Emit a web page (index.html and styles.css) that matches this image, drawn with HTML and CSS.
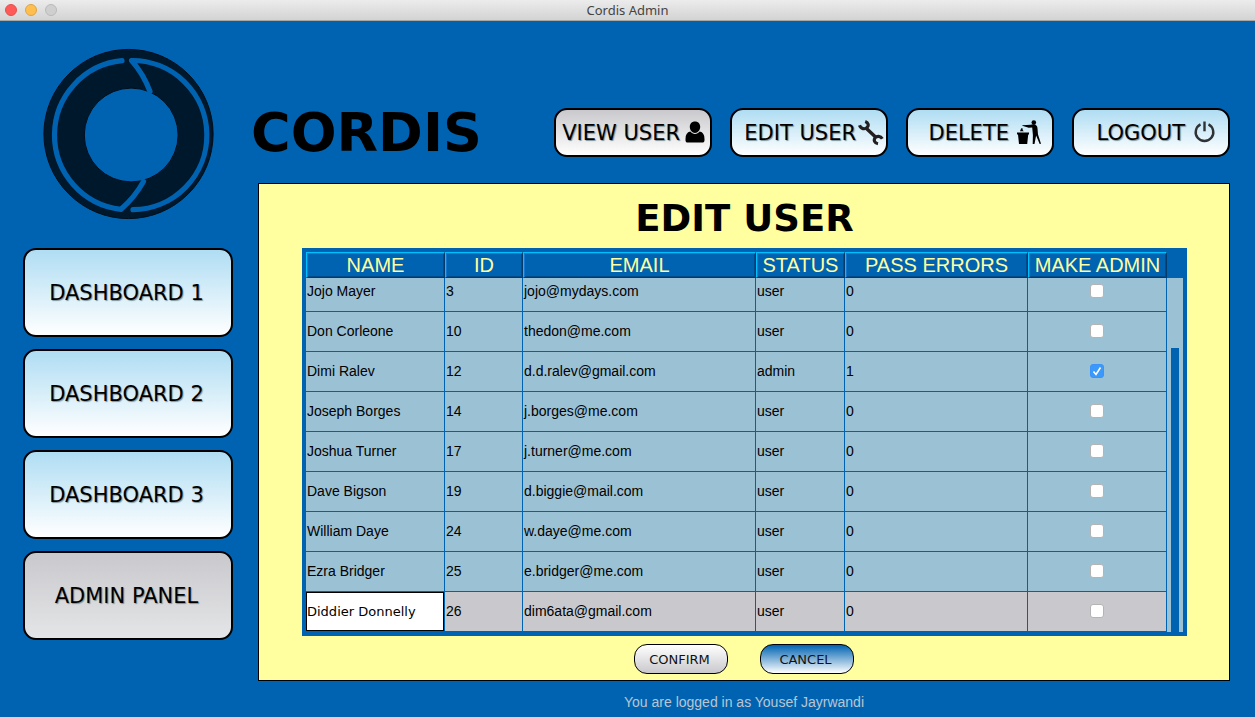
FILE: index.html
```html
<!DOCTYPE html>
<html lang="en">
<head>
<meta charset="utf-8">
<title>Cordis Admin</title>
<link rel="stylesheet" href="styles.css">
</head>
<body>
<header class="titlebar">
  <div class="lights"><span class="light light-close"></span><span class="light light-min"></span><span class="light"></span></div>
  <span class="window-title">Cordis Admin</span>
</header>
<div class="app">
  <aside class="sidebar">
    <svg class="logo" viewBox="42 48 172 172" role="img" aria-label="Cordis logo">
      <circle cx="128.5" cy="134" r="84.6" fill="#00182b" stroke="#000d1a" stroke-width="1"/>
      <circle cx="131.2" cy="135" r="46.9" fill="#0063b1" stroke="#000d1a" stroke-width="1"/>
      <g fill="none" stroke="#0063b1" stroke-width="5.2" stroke-linecap="round">
        <path d="M122 60.7A74.7 74.7 0 0 0 121 209.3Q135 197 143.500 181.500" stroke-linejoin="miter"/>
        <path d="M133 209.700A74.600 74.600 0 0 0 131.500 60.500Q143.500 74 150 91.500" stroke-linejoin="round"/>
      </g>
    </svg>
    <nav class="side-nav">
      <button class="btn side-btn" type="button">DASHBOARD 1</button>
      <button class="btn side-btn" type="button">DASHBOARD 2</button>
      <button class="btn side-btn" type="button">DASHBOARD 3</button>
      <button class="btn side-btn side-btn-active" type="button">ADMIN PANEL</button>
    </nav>
  </aside>
  <main class="main">
    <div class="topbar">
      <h1 class="brand">CORDIS</h1>
      <div class="tools">
        <button class="btn tool tool-active" type="button">VIEW USER
          <svg class="icon" viewBox="0 0 26 26" aria-hidden="true"><path d="M13 1.500c3.200 0 5.200 2.200 5.200 5.300 0 3.300-2.200 6.200-5.200 6.200s-5.200-2.900-5.200-6.200c0-3.100 2-5.300 5.200-5.300zM8.300 11.600c1.300 1.500 2.800 2.300 4.700 2.300s3.400-.8 4.700-2.300c3.300.7 4.800 3.200 4.800 7.400v1.200c0 1.400-.8 2.300-2.300 2.300H5.800c-1.500 0-2.300-.9-2.300-2.300V19c0-4.200 1.500-6.700 4.800-7.400z"/></svg>
        </button>
        <button class="btn tool" type="button">EDIT USER
          <svg class="icon" viewBox="0 0 26 26" aria-hidden="true"><g fill="none" stroke="#231f20"><path stroke-width="3.400" d="M8.500 8.500l9 8.500"/><path stroke-width="3.200" d="M1.500 5.300C2.700 8.900 7 9.800 9.200 7.300c1.800-2 1.200-4.600-2-5.700M24.300 18.700c-1.700-3-5.600-2.900-7.200-.8-1.700 2.300-.7 5.200 2.900 5.900"/></g></svg>
        </button>
        <button class="btn tool tool-short" type="button">DELETE
          <svg class="icon" viewBox="0 0 26 26" aria-hidden="true"><path d="M1 12.500h12v2h-.8l-1 9.500H3l-1-9.500H1zM4 11.300l1.200-3 1.600.2-.2 1.400 1.200 1.400z"/><circle cx="17.800" cy="2.500" r="2.300"/><path d="M6.300 5.200l8.200-.4c1.700-.4 3.200-.8 4.900 0 1.500.7 2 2 2.100 3.600l.5 6 3 9.300-1.300.3-3.600-8.500-1.600 8.400H16.700l.2-8.900-.7-7.500-3.500.3-6.400-2z"/></svg>
        </button>
        <button class="btn tool tool-roomy" type="button">LOGOUT
          <svg class="icon" viewBox="0 0 26 26" aria-hidden="true"><g fill="none" stroke="#2e3234" stroke-width="2.400"><path d="M8.500 4.400a8.800 8.800 0 1 0 8 0"/><path d="M12.500 1.500v9.800"/></g></svg>
        </button>
      </div>
    </div>
    <section class="panel">
      <h2 class="panel-title">EDIT USER</h2>
      <div class="frame">
        <table class="users">
          <colgroup><col class="col-name"><col class="col-id"><col><col class="col-status"><col class="col-errors"><col class="col-admin"></colgroup>
          <thead>
            <tr><th>NAME</th><th>ID</th><th>EMAIL</th><th>STATUS</th><th>PASS ERRORS</th><th>MAKE ADMIN</th></tr>
          </thead>
          <tbody>
            <tr class="cut"><td>Jojo Mayer</td><td>3</td><td>jojo@mydays.com</td><td>user</td><td>0</td><td class="tick"><input type="checkbox" aria-label="Make Jojo Mayer admin"></td></tr>
            <tr><td>Don Corleone</td><td>10</td><td>thedon@me.com</td><td>user</td><td>0</td><td class="tick"><input type="checkbox" aria-label="Make Don Corleone admin"></td></tr>
            <tr><td>Dimi Ralev</td><td>12</td><td>d.d.ralev@gmail.com</td><td>admin</td><td>1</td><td class="tick"><input type="checkbox" checked aria-label="Make Dimi Ralev admin"></td></tr>
            <tr><td>Joseph Borges</td><td>14</td><td>j.borges@me.com</td><td>user</td><td>0</td><td class="tick"><input type="checkbox" aria-label="Make Joseph Borges admin"></td></tr>
            <tr><td>Joshua Turner</td><td>17</td><td>j.turner@me.com</td><td>user</td><td>0</td><td class="tick"><input type="checkbox" aria-label="Make Joshua Turner admin"></td></tr>
            <tr><td>Dave Bigson</td><td>19</td><td>d.biggie@mail.com</td><td>user</td><td>0</td><td class="tick"><input type="checkbox" aria-label="Make Dave Bigson admin"></td></tr>
            <tr><td>William Daye</td><td>24</td><td>w.daye@me.com</td><td>user</td><td>0</td><td class="tick"><input type="checkbox" aria-label="Make William Daye admin"></td></tr>
            <tr><td>Ezra Bridger</td><td>25</td><td>e.bridger@me.com</td><td>user</td><td>0</td><td class="tick"><input type="checkbox" aria-label="Make Ezra Bridger admin"></td></tr>
            <tr class="selected"><td class="editing"><input class="name-input" type="text" value="Diddier Donnelly" aria-label="Name"></td><td>26</td><td>dim6ata@gmail.com</td><td>user</td><td>0</td><td class="tick"><input type="checkbox" aria-label="Make Diddier Donnelly admin"></td></tr>
          </tbody>
        </table>
        <div class="scroll"><div class="thumb"></div></div>
      </div>
      <div class="actions">
        <button class="action" type="button">CONFIRM</button>
        <button class="action action-cancel" type="button">CANCEL</button>
      </div>
    </section>
    <p class="status">You are logged in as Yousef Jayrwandi</p>
  </main>
</div>
</body>
</html>
```
FILE: styles.css
```css
:root {
  --blue: #0063b1;
  --pale: #9bc1d5;
  --cream: #ffff9f;
}

* { box-sizing: border-box; }

body {
  margin: 0;
  min-height: 100vh;
  background: var(--blue);
  font-family: Helvetica, "Liberation Sans", Arial, sans-serif;
  font-size: 14px;
  color: #000;
}

.titlebar {
  display: grid;
  grid-template-columns: 1fr auto 1fr;
  align-items: center;
  height: 21px;
  padding: 0 5px;
  background: linear-gradient(#ececec, #d3d3d3);
  border-bottom: 1px solid #aaa8a5;
}

.lights { display: flex; gap: 8px; }

.light {
  width: 12px;
  height: 12px;
  border: 1px solid #bababa;
  border-radius: 50%;
  background: #cfcfcf;
}

.light-close { background: #ff5a57; border-color: #e2514d; }
.light-min { background: #ffbf4f; border-color: #dfa443; }

.window-title {
  font: 13px/20px "Noto Sans", sans-serif;
  color: #444;
}

.app {
  display: grid;
  grid-template-columns: 210px 1fr;
  column-gap: 17px;
  padding: 0 25px 0 23px;
}

.sidebar {
  display: flex;
  flex-direction: column;
  align-items: center;
  gap: 28px;
  padding-top: 27px;
}

.logo { width: 172px; height: 172px; }

.side-nav {
  display: flex;
  flex-direction: column;
  gap: 12px;
  width: 100%;
}

.btn {
  border: 2px solid #000;
  border-radius: 13px;
  background: linear-gradient(#afddf3, #fff);
  font-family: Tahoma, "DejaVu Sans", sans-serif;
  font-size: 21px;
  color: #000;
  text-shadow: 1px 1px 1px #7d9298;
  white-space: nowrap;
}

.side-btn { height: 89px; padding: 0 3px 0 0; }
.side-btn-active { background: linear-gradient(#c9c9cd, #e4e5e7); }

.main {
  display: flex;
  flex-direction: column;
  padding-top: 87px;
  min-width: 0;
}

.topbar {
  display: flex;
  align-items: center;
  justify-content: space-between;
  height: 49px;
}

.brand {
  margin: 0;
  padding-left: 1px;
  font: bold 54px/50px Verdana, "DejaVu Sans", sans-serif;
}

.tools { display: flex; gap: 18px; }

.tool {
  display: flex;
  align-items: center;
  justify-content: flex-end;
  width: 158px;
  height: 49px;
  padding: 0 2px;
}

.tool-active { background: linear-gradient(#c9c9cd, #fff); }
.tool:not(.tool-short, .tool-roomy) { gap: 2px; }
.tool-short { width: 148px; gap: 7px; padding-right: 10px; }
.tool-roomy { gap: 7px; padding-right: 10px; }

.icon { flex: none; width: 26px; height: 26px; }

.panel {
  margin: 26px 0 0 8px;
  padding: 6px 42px 6px 43px;
  background: var(--cream);
  border: 1px solid #000;
}

.panel-title {
  margin: 0;
  font: bold 37px/58px Verdana, "DejaVu Sans", sans-serif;
  text-align: center;
}

.frame {
  display: flex;
  border: 4px solid var(--blue);
  background: var(--blue);
}

.users {
  flex: 1;
  min-width: 0;
  width: 100%;
  table-layout: fixed;
  border-collapse: separate;
  border-spacing: 0;
}

.col-name, .col-admin { width: 139px; }
.col-id { width: 78px; }
.col-status { width: 89px; }
.col-errors { width: 183px; }

.users th {
  height: 26px;
  padding: 0;
  border: 1px solid;
  border-color: #00bfff #003a68 #003a68 #00bfff;
  box-shadow: inset 1px 1px #1178d0, inset -1px -1px #004a88;
  font-size: 20px;
  font-weight: normal;
  line-height: 24px;
  color: var(--cream);
  white-space: nowrap;
}

.users td {
  height: 40px;
  padding: 0 0 2px 1px;
  background: var(--pale);
  border: solid var(--blue);
  border-width: 0 1px 1px 0;
}

.users .cut td { height: 34px; padding-bottom: 8px; }
.users .selected td { background: #c9c9cd; }
.users .selected .editing { padding: 0; }

.name-input {
  display: block;
  width: 100%;
  height: 39px;
  padding: 0;
  border: 1px solid #000;
  border-radius: 0;
  background: #fff;
  font: 13px "Lucida Grande", "DejaVu Sans", sans-serif;
  color: #000;
}

.users .tick { padding-left: 0; padding-right: 1px; }

.tick input {
  appearance: none;
  display: block;
  width: 14px;
  height: 14px;
  margin: 0 auto;
  border: 1px solid #b4b4b4;
  border-radius: 3px;
  background: #fff;
}

.tick input:checked {
  border-color: #3b93f7;
  background: #3b99fc url("data:image/svg+xml,%3Csvg xmlns='http://www.w3.org/2000/svg' viewBox='0 0 12 12'%3E%3Cpath d='M2.500 6.500l2.500 3 4.500-7' fill='none' stroke='white' stroke-width='1.600'/%3E%3C/svg%3E") center / 12px;
}

.scroll {
  display: flex;
  width: 16px;
  margin-top: 26px;
  padding: 70px 4px 0;
  background: var(--pale);
}

.thumb { flex: 1; background: var(--blue); }

.actions {
  display: flex;
  justify-content: center;
  gap: 32px;
  padding: 8px 2px 0 0;
}

.action {
  width: 94px;
  height: 30px;
  padding: 0 2px 0 0;
  border: 1px solid #000;
  border-radius: 13px;
  background: linear-gradient(#fff, #c9c9cd);
  font: 13px Tahoma, "DejaVu Sans", sans-serif;
  color: #111;
}

.action-cancel { background: linear-gradient(#0063b1, #fff); }

.status {
  margin: 13px 0 0 8px;
  line-height: 16px;
  text-align: center;
  color: #b9c6d2;
}
```
